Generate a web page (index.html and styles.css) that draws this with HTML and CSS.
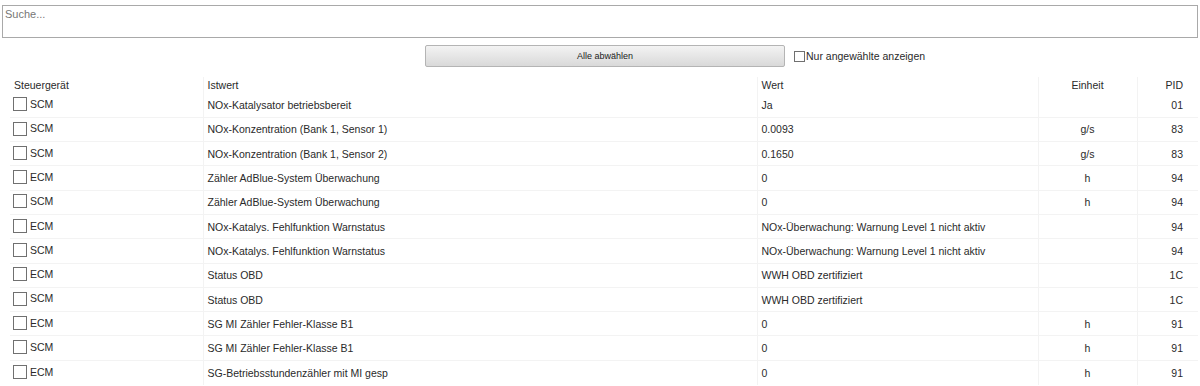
FILE: index.html
```html
<!DOCTYPE html>
<html>
  <head>
    <link rel="stylesheet" href="styles.css">
  </head>
  <body>
    <div class="page">
      <textarea class="search" placeholder="Suche..."></textarea>

      <div class="toolbar">
        <button class="select-all">Alle abwählen</button>
        <label class="only-selected">
          <span class="box small"></span>Nur angewählte anzeigen
        </label>
      </div>

      <table class="values">
        <colgroup>
          <col class="c-unit">
          <col class="c-name">
          <col class="c-value">
          <col class="c-dim">
          <col class="c-pid">
        </colgroup>
        <thead>
          <tr>
            <th>Steuergerät</th>
            <th>Istwert</th>
            <th>Wert</th>
            <th class="center">Einheit</th>
            <th class="right">PID</th>
          </tr>
        </thead>
        <tbody>
          <tr><td><span class="box"></span>SCM</td><td>NOx-Katalysator betriebsbereit</td><td>Ja</td><td class="center"></td><td class="right">01</td></tr>
          <tr><td><span class="box"></span>SCM</td><td>NOx-Konzentration (Bank 1, Sensor 1)</td><td>0.0093</td><td class="center">g/s</td><td class="right">83</td></tr>
          <tr><td><span class="box"></span>SCM</td><td>NOx-Konzentration (Bank 1, Sensor 2)</td><td>0.1650</td><td class="center">g/s</td><td class="right">83</td></tr>
          <tr><td><span class="box"></span>ECM</td><td>Zähler AdBlue-System Überwachung</td><td>0</td><td class="center">h</td><td class="right">94</td></tr>
          <tr><td><span class="box"></span>SCM</td><td>Zähler AdBlue-System Überwachung</td><td>0</td><td class="center">h</td><td class="right">94</td></tr>
          <tr><td><span class="box"></span>ECM</td><td>NOx-Katalys. Fehlfunktion Warnstatus</td><td>NOx-Überwachung: Warnung Level 1 nicht aktiv</td><td class="center"></td><td class="right">94</td></tr>
          <tr><td><span class="box"></span>SCM</td><td>NOx-Katalys. Fehlfunktion Warnstatus</td><td>NOx-Überwachung: Warnung Level 1 nicht aktiv</td><td class="center"></td><td class="right">94</td></tr>
          <tr><td><span class="box"></span>ECM</td><td>Status OBD</td><td>WWH OBD zertifiziert</td><td class="center"></td><td class="right">1C</td></tr>
          <tr><td><span class="box"></span>SCM</td><td>Status OBD</td><td>WWH OBD zertifiziert</td><td class="center"></td><td class="right">1C</td></tr>
          <tr><td><span class="box"></span>ECM</td><td>SG MI Zähler Fehler-Klasse B1</td><td>0</td><td class="center">h</td><td class="right">91</td></tr>
          <tr><td><span class="box"></span>SCM</td><td>SG MI Zähler Fehler-Klasse B1</td><td>0</td><td class="center">h</td><td class="right">91</td></tr>
          <tr><td><span class="box"></span>ECM</td><td>SG-Betriebsstundenzähler mit MI gesp</td><td>0</td><td class="center">h</td><td class="right">91</td></tr>
        </tbody>
      </table>
    </div>
  </body>
</html>
```

FILE: styles.css
```css
* {
  box-sizing: border-box;
  margin: 0;
  padding: 0;
}

body {
  background: #fff;
  font-family: 'Liberation Sans', Arial, sans-serif;
  font-size: 10.5px;
  color: #2a2a2a;
  overflow: hidden;
}

.page {
  padding: 5px 2px 0 2px;
}

.search {
  display: block;
  width: 100%;
  height: 33px;
  border: 1px solid #a9a9a9;
  padding: 2px 2px;
  font-family: 'Liberation Sans', Arial, sans-serif;
  font-size: 11px;
  resize: none;
  outline: none;
}

.search::placeholder {
  color: #777;
}

.toolbar {
  display: flex;
  align-items: center;
  margin: 7px 0 0 423px;
  height: 22px;
}

.select-all {
  width: 360px;
  height: 22px;
  border: 1px solid #b4b4b4;
  border-radius: 2px;
  background: linear-gradient(#f3f3f3, #e6e6e6 50%, #d9d9d9);
  font-family: 'Liberation Sans', Arial, sans-serif;
  font-size: 9px;
  color: #222;
  cursor: pointer;
}

.only-selected {
  display: flex;
  align-items: center;
  margin-left: 9px;
  font-size: 10.5px;
}

.box {
  display: inline-block;
  flex-shrink: 0;
  width: 14px;
  height: 14px;
  border: 1px solid #707070;
  background: #fff;
  vertical-align: middle;
  margin-right: 3px;
  position: relative;
  top: -1px;
}

.box.small {
  width: 11px;
  height: 11px;
  margin-right: 1px;
  top: 0;
}

.values {
  margin: 10px 0 0 8px;
  width: 1188px;
  border-collapse: collapse;
  table-layout: fixed;
  font: inherit;
}

.c-unit { width: 193px; }
.c-name { width: 554px; }
.c-value { width: 281px; }
.c-dim { width: 99px; }
.c-pid { width: 61px; }

th {
  height: 16px;
  font-weight: normal;
  text-align: left;
  padding: 2px 4px 0;
  vertical-align: top;
}

td {
  height: 24.3px;
  padding: 0 4px;
  border-top: 1px solid #f3f3f3;
  white-space: nowrap;
  overflow: hidden;
}

tbody tr:first-child td {
  border-top: none;
}

th + th,
td + td {
  border-left: 1px solid #f3f3f3;
}

td:first-child {
  padding-left: 3px;
}

.center {
  text-align: center;
}

th.right,
td.right {
  text-align: right;
  padding-right: 15px;
}
```
